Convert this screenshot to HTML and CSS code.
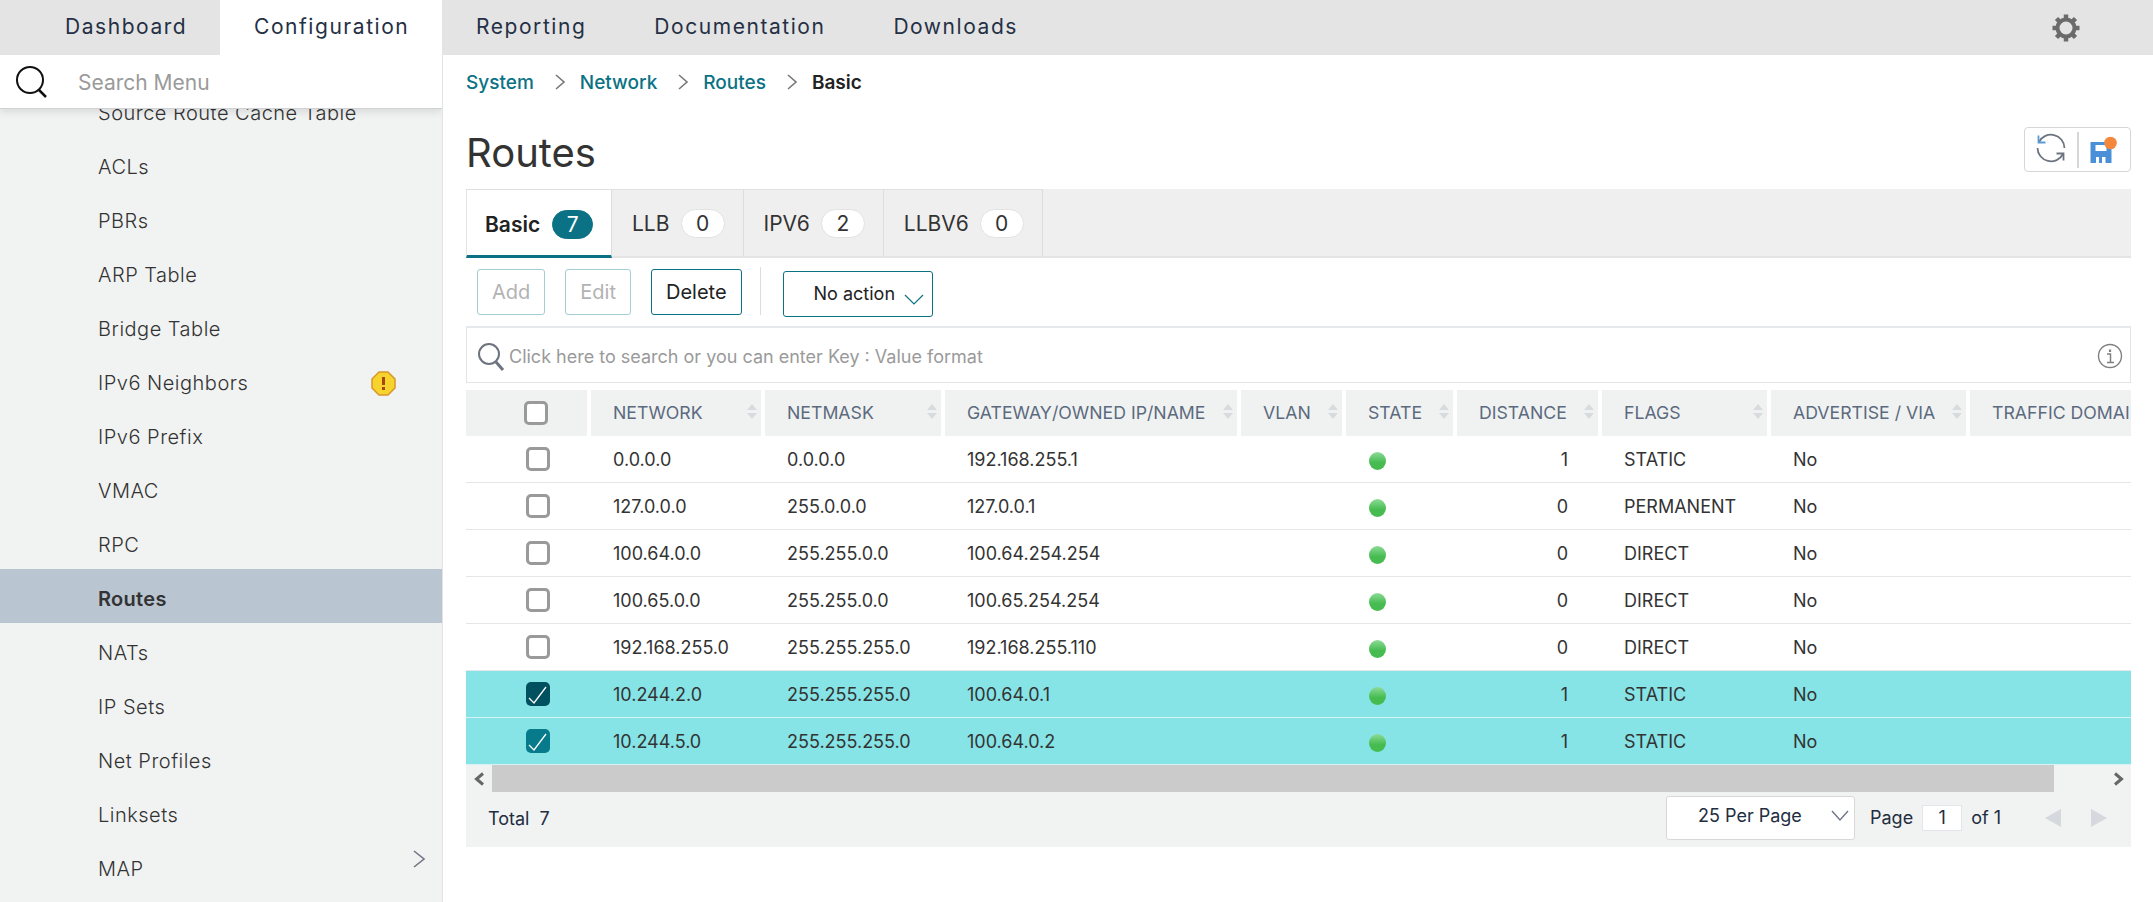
FILE: index.html
```html
<!DOCTYPE html>
<html lang="en">
<head>
    <meta charset="UTF-8">
    <title>Routes</title>
    <link rel="stylesheet" href="styles.css">
</head>
<body>
    <div class="topbar">
        <a class="nav-item nav-first">Dashboard</a>
        <a class="nav-item nav-active">Configuration</a>
        <a class="nav-item">Reporting</a>
        <a class="nav-item">Documentation</a>
        <a class="nav-item">Downloads</a>
        <svg class="gear" width="30" height="30" viewBox="0 0 30 30">
            <circle cx="15" cy="15" r="8.5" fill="none" stroke="#6b6b6b" stroke-width="4"/>
            <g stroke="#6b6b6b" stroke-width="4.5">
                <path d="M15 1.5V6M15 24V28.5M1.5 15H6M24 15H28.5M5.5 5.5L8.6 8.6M21.4 21.4L24.5 24.5M24.5 5.5L21.4 8.6M8.6 21.4L5.5 24.5"/>
            </g>
        </svg>
    </div>

    <div class="layout">
        <aside class="sidebar">
            <div class="menu-search">
                <svg width="34" height="34" viewBox="0 0 34 34">
                    <circle cx="15" cy="15" r="13" fill="none" stroke="#111" stroke-width="2"/>
                    <path d="M24 25L31 32" stroke="#111" stroke-width="2.5"/>
                </svg>
                <span>Search Menu</span>
            </div>
            <ul class="menu">
                <li class="menu-clipped">Source Route Cache Table</li>
                <li>ACLs</li>
                <li>PBRs</li>
                <li>ARP Table</li>
                <li>Bridge Table</li>
                <li>IPv6 Neighbors
                    <svg class="warn" width="25" height="25" viewBox="0 0 25 25">
                        <path d="M8 1H17L24 8V17L17 24H8L1 17V8Z" fill="#f6d32d" stroke="#d9962b" stroke-width="1.5" stroke-linejoin="round"/>
                        <path d="M12.5 6V14" stroke="#a8480f" stroke-width="3"/>
                        <path d="M12.5 16V19" stroke="#a8480f" stroke-width="3"/>
                    </svg>
                </li>
                <li>IPv6 Prefix</li>
                <li>VMAC</li>
                <li>RPC</li>
                <li class="menu-active">Routes</li>
                <li>NATs</li>
                <li>IP Sets</li>
                <li>Net Profiles</li>
                <li>Linksets</li>
                <li>MAP
                    <svg class="menu-arrow" width="12" height="18" viewBox="0 0 12 18">
                        <path d="M1 1L11 9L1 17" fill="none" stroke="#6f7686" stroke-width="1.6"/>
                    </svg>
                </li>
            </ul>
        </aside>

        <main class="content">
            <div class="breadcrumb">
                <a>System</a>
                <svg width="12" height="18" viewBox="0 0 12 18"><path d="M2 2L10 9L2 16" fill="none" stroke="#777" stroke-width="1.6"/></svg>
                <a>Network</a>
                <svg width="12" height="18" viewBox="0 0 12 18"><path d="M2 2L10 9L2 16" fill="none" stroke="#777" stroke-width="1.6"/></svg>
                <a>Routes</a>
                <svg width="12" height="18" viewBox="0 0 12 18"><path d="M2 2L10 9L2 16" fill="none" stroke="#777" stroke-width="1.6"/></svg>
                <b>Basic</b>
            </div>

            <div class="title-row">
                <h1>Routes</h1>
                <div class="page-actions">
                    <div class="action action-refresh">
                        <svg width="30" height="30" viewBox="0 0 30 30" fill="none" stroke="#6d7480" stroke-width="1.8">
                            <path d="M3 9A13.5 13.5 0 0 1 28.5 15"/>
                            <path d="M27 21A13.5 13.5 0 0 1 1.5 15"/>
                            <path d="M2.5 2.5V9.5H9.5" stroke="#5b9bd5"/>
                            <path d="M27.5 27.5V20.5H20.5"/>
                        </svg>
                    </div>
                    <div class="action action-save">
                        <svg width="32" height="32" viewBox="0 0 32 32">
                            <path d="M1.5 8H22.5V29H1.5Z" fill="#4a90d9"/>
                            <path d="M6.5 11H17.5V17H6.5Z" fill="#fff"/>
                            <path d="M7 23H16.5V29H7Z" fill="#fff"/>
                            <path d="M10 23H13V29H10Z" fill="#4a90d9"/>
                            <circle cx="21.5" cy="9" r="6.3" fill="#f5873c"/>
                        </svg>
                    </div>
                </div>
            </div>

            <div class="tabs">
                <div class="tab tab-active">Basic <span class="badge badge-on">7</span></div>
                <div class="tab">LLB <span class="badge">0</span></div>
                <div class="tab">IPV6 <span class="badge">2</span></div>
                <div class="tab">LLBV6 <span class="badge">0</span></div>
            </div>

            <div class="toolbar">
                <button class="btn btn-off">Add</button>
                <button class="btn btn-off">Edit</button>
                <button class="btn">Delete</button>
                <div class="tool-sep"></div>
                <div class="action-select">
                    No action
                    <svg width="20" height="12" viewBox="0 0 20 12"><path d="M1 2L10 11L19 2" fill="none" stroke="#0b7285" stroke-width="1.2"/></svg>
                </div>
            </div>

            <div class="searchbox">
                <svg width="28" height="30" viewBox="0 0 28 30" fill="none" stroke="#6d7480">
                    <circle cx="12" cy="12" r="10" stroke-width="2"/>
                    <path d="M19 20L26 28" stroke-width="3"/>
                </svg>
                <span>Click here to search or you can enter Key : Value format</span>
                <svg class="info" width="26" height="26" viewBox="0 0 26 26" fill="none" stroke="#808080">
                    <circle cx="13" cy="13" r="11.5" stroke-width="1.4"/>
                    <path d="M10 11H13.5V19M10 19.5H17" stroke-width="1.5"/>
                    <path d="M13 6.5V9" stroke-width="2.2"/>
                </svg>
            </div>

            <div class="grid">
                <div class="row row-head">
                    <div class="th"><span class="check check-head"></span></div>
                    <div class="th">NETWORK<i class="sort"></i></div>
                    <div class="th">NETMASK<i class="sort"></i></div>
                    <div class="th">GATEWAY/OWNED IP/NAME<i class="sort"></i></div>
                    <div class="th">VLAN<i class="sort"></i></div>
                    <div class="th">STATE<i class="sort"></i></div>
                    <div class="th">DISTANCE<i class="sort"></i></div>
                    <div class="th">FLAGS<i class="sort"></i></div>
                    <div class="th">ADVERTISE / VIA<i class="sort"></i></div>
                    <div class="th th-last">TRAFFIC DOMAIN</div>
                </div>
                <div class="row">
                    <div class="td td-check"><span class="check"></span></div>
                    <div class="td">0.0.0.0</div><div class="td">0.0.0.0</div><div class="td">192.168.255.1</div><div class="td"></div>
                    <div class="td"><span class="dot"></span></div><div class="td td-num">1</div><div class="td">STATIC</div><div class="td">No</div><div class="td"></div>
                </div>
                <div class="row">
                    <div class="td td-check"><span class="check"></span></div>
                    <div class="td">127.0.0.0</div><div class="td">255.0.0.0</div><div class="td">127.0.0.1</div><div class="td"></div>
                    <div class="td"><span class="dot"></span></div><div class="td td-num">0</div><div class="td">PERMANENT</div><div class="td">No</div><div class="td"></div>
                </div>
                <div class="row">
                    <div class="td td-check"><span class="check"></span></div>
                    <div class="td">100.64.0.0</div><div class="td">255.255.0.0</div><div class="td">100.64.254.254</div><div class="td"></div>
                    <div class="td"><span class="dot"></span></div><div class="td td-num">0</div><div class="td">DIRECT</div><div class="td">No</div><div class="td"></div>
                </div>
                <div class="row">
                    <div class="td td-check"><span class="check"></span></div>
                    <div class="td">100.65.0.0</div><div class="td">255.255.0.0</div><div class="td">100.65.254.254</div><div class="td"></div>
                    <div class="td"><span class="dot"></span></div><div class="td td-num">0</div><div class="td">DIRECT</div><div class="td">No</div><div class="td"></div>
                </div>
                <div class="row">
                    <div class="td td-check"><span class="check"></span></div>
                    <div class="td">192.168.255.0</div><div class="td">255.255.255.0</div><div class="td">192.168.255.110</div><div class="td"></div>
                    <div class="td"><span class="dot"></span></div><div class="td td-num">0</div><div class="td">DIRECT</div><div class="td">No</div><div class="td"></div>
                </div>
                <div class="row row-selected">
                    <div class="td td-check"><span class="check check-on check-dark"><svg width="24" height="24" viewBox="0 0 24 24"><path d="M3 16L8 21L20 5" fill="none" stroke="#fff" stroke-width="1.3"/></svg></span></div>
                    <div class="td">10.244.2.0</div><div class="td">255.255.255.0</div><div class="td">100.64.0.1</div><div class="td"></div>
                    <div class="td"><span class="dot"></span></div><div class="td td-num">1</div><div class="td">STATIC</div><div class="td">No</div><div class="td"></div>
                </div>
                <div class="row row-selected">
                    <div class="td td-check"><span class="check check-on"><svg width="24" height="24" viewBox="0 0 24 24"><path d="M3 16L8 21L20 5" fill="none" stroke="#fff" stroke-width="1.3"/></svg></span></div>
                    <div class="td">10.244.5.0</div><div class="td">255.255.255.0</div><div class="td">100.64.0.2</div><div class="td"></div>
                    <div class="td"><span class="dot"></span></div><div class="td td-num">1</div><div class="td">STATIC</div><div class="td">No</div><div class="td"></div>
                </div>
            </div>

            <div class="scrollbar">
                <div class="scroll-btn"><svg width="12" height="14" viewBox="0 0 12 14"><path d="M10 1.5L3.5 7L10 12.5" fill="none" stroke="#666" stroke-width="3"/></svg></div>
                <div class="scroll-thumb"></div>
                <div class="scroll-btn scroll-btn-right"><svg width="12" height="14" viewBox="0 0 12 14"><path d="M2 1.5L8.5 7L2 12.5" fill="none" stroke="#666" stroke-width="3"/></svg></div>
            </div>

            <div class="pager">
                <div class="total">Total&nbsp; 7</div>
                <div class="per-page">
                    25 Per Page
                    <svg width="18" height="12" viewBox="0 0 18 12"><path d="M1 1L9 10L17 1" fill="none" stroke="#6f7686" stroke-width="1.4"/></svg>
                </div>
                <span class="page-label">Page</span>
                <div class="page-input">1</div>
                <span class="page-of">of 1</span>
                <i class="page-prev"></i>
                <i class="page-next"></i>
            </div>
        </main>
    </div>
</body>
</html>
```

FILE: styles.css
```css
* {
    box-sizing: border-box;
}
html, body {
    height: 100%;
}
body {
    margin: 0;
    overflow: hidden;
    background-color: #ffffff;
    color: #333333;
    font-family: 'Inter', 'Liberation Sans', sans-serif;
    font-size: 18px;
}

/* top navigation */
.topbar {
    display: flex;
    align-items: center;
    height: 55px;
    background-color: #e4e4e4;
}
.nav-item {
    display: flex;
    align-items: center;
    height: 55px;
    padding: 0 34px 2px;
    font-size: 21px;
    letter-spacing: 1.55px;
    color: #243044;
}
.nav-first {
    width: 220px;
    padding-left: 65px;
}
.nav-active {
    width: 222px;
    background-color: #ffffff;
}
.gear {
    margin-left: auto;
    margin-right: 72px;
}

.layout {
    display: flex;
    height: 847px;
}

/* left menu */
.sidebar {
    position: relative;
    width: 443px;
    flex-shrink: 0;
    background-color: #f1f2f2;
    border-right: 1px solid #e2e3e4;
    overflow: hidden;
}
.menu-search {
    position: absolute;
    top: 0;
    left: 0;
    right: 0;
    z-index: 1;
    display: flex;
    align-items: center;
    height: 54px;
    padding-left: 15px;
    background-color: #ffffff;
    border-bottom: 1px solid #cfd2d5;
    box-shadow: 0 3px 8px rgba(0, 0, 0, 0.1);
    font-size: 21px;
    color: #9a9a9a;
}
.menu-search span {
    margin-left: 29px;
    margin-top: 2px;
}
.menu {
    list-style: none;
    margin: 0;
    padding: 28px 0 0;
}
.menu li {
    position: relative;
    display: flex;
    align-items: center;
    height: 54px;
    padding-left: 98px;
    padding-top: 6px;
    font-size: 20px;
    font-weight: 300;
    letter-spacing: 0.5px;
    color: #333333;
}
.menu .menu-active {
    background-color: #bac5d2;
    font-weight: 600;
    letter-spacing: 0.3px;
}
.warn {
    position: absolute;
    left: 371px;
    top: 18px;
}
.menu-arrow {
    position: absolute;
    left: 413px;
    top: 11px;
}

/* main column */
.content {
    width: 1665px;
    margin-left: 23px;
}
.breadcrumb {
    display: flex;
    align-items: center;
    gap: 17px;
    height: 54px;
    font-size: 19px;
    font-weight: 500;
    color: #0b7285;
}
.breadcrumb svg {
    margin-left: 3px;
    margin-right: -3px;
}
.breadcrumb b {
    font-weight: 600;
    color: #222222;
}
.title-row {
    display: flex;
    justify-content: space-between;
    height: 80px;
}
h1 {
    margin: 20px 0 0;
    font-size: 40px;
    font-weight: 400;
    line-height: 48px;
    color: #333333;
}
.page-actions {
    display: flex;
    align-items: center;
    width: 107px;
    height: 45px;
    margin-top: 18px;
    border: 1px solid #d6d6d6;
    border-radius: 4px;
}
.action {
    display: flex;
    align-items: center;
    justify-content: center;
    width: 53px;
    height: 36px;
}
.action-refresh svg {
    margin-bottom: 4px;
}
.action-save {
    border-left: 2px solid #d6d6d6;
}

/* tabs */
.tabs {
    display: flex;
    height: 69px;
    background-color: #efefef;
    border-bottom: 2px solid #e4e4e4;
}
.tab {
    display: flex;
    align-items: center;
    gap: 11px;
    padding: 1px 18px 0 20px;
    font-size: 21px;
    color: #333333;
    border-top: 1px solid #e0e0e0;
    border-right: 1px solid #dcdcdc;
}
.tab-active {
    width: 146px;
    padding-top: 4px;
    padding-left: 18px;
    gap: 12px;
    background-color: #ffffff;
    font-weight: 600;
    color: #222222;
    border-left: 1px solid #e4e4e4;
    border-bottom: 3px solid #0b7285;
    margin-bottom: -2px;
}
.badge {
    display: flex;
    align-items: center;
    justify-content: center;
    width: 44px;
    height: 29px;
    background-color: #ffffff;
    border: 1px solid #e2e2e2;
    border-radius: 15px;
    font-weight: 400;
}
.badge-on {
    width: 43px;
    background-color: #0b7285;
    border-color: #0b7285;
    color: #ffffff;
}

/* toolbar */
.toolbar {
    display: flex;
    align-items: flex-start;
    height: 70px;
    padding-top: 11px;
    padding-left: 11px;
    border-bottom: 2px solid #e6e9ec;
}
.btn {
    height: 46px;
    margin-right: 20px;
    padding: 0 14px;
    background-color: #ffffff;
    border: 1px solid #0b7285;
    border-radius: 3px;
    font-family: inherit;
    font-size: 20px;
    color: #222222;
}
.btn-off {
    border-color: #a5ced6;
    color: #b3b3b3;
}
.tool-sep {
    width: 1px;
    height: 48px;
    margin-top: -2px;
    margin-left: -2px;
    background-color: #dddddd;
}
.action-select {
    display: flex;
    align-items: center;
    width: 150px;
    height: 46px;
    margin-top: 2px;
    margin-left: 22px;
    padding-left: 30px;
    padding-bottom: 2px;
    border: 1px solid #0b7285;
    border-radius: 3px;
    font-size: 18px;
    color: #222222;
}
.action-select svg {
    margin-left: 9px;
    margin-top: 12px;
}

/* filter box */
.searchbox {
    position: relative;
    display: flex;
    align-items: center;
    height: 55px;
    padding-left: 10px;
    padding-top: 3px;
    border-left: 1px solid #e4e4e4;
    border-right: 1px solid #e4e4e4;
    border-bottom: 1px solid #e4e4e4;
    color: #9a9a9a;
}
.searchbox span {
    margin-left: 4px;
}
.info {
    position: absolute;
    right: 7px;
    top: 15px;
}

/* routes table */
.grid {
    margin-top: 7px;
    overflow: hidden;
}
.row {
    display: grid;
    grid-template-columns: 125px 174px 180px 296px 105px 111px 145px 169px 199px 161px;
    height: 47px;
    border-bottom: 1px solid #e4e6e8;
}
.row-head {
    height: 46px;
    border-bottom: 0;
}
.th {
    position: relative;
    display: flex;
    align-items: center;
    margin-right: 4px;
    padding-left: 22px;
    padding-bottom: 2px;
    background-color: #f0f2f2;
    font-size: 17.7px;
    color: #5c6a7e;
    white-space: nowrap;
    overflow: hidden;
}
.th:first-child {
    padding-left: 58px;
    padding-bottom: 0;
}
.th-last {
    margin-right: 0;
}
.sort {
    position: absolute;
    right: 4px;
    top: 14px;
    width: 10px;
    height: 15px;
}
.sort::before, .sort::after {
    content: "";
    position: absolute;
    left: 0;
    border-left: 5px solid transparent;
    border-right: 5px solid transparent;
}
.sort::before {
    top: 0;
    border-bottom: 6px solid #d8dbde;
}
.sort::after {
    bottom: 0;
    border-top: 6px solid #d8dbde;
}
.td {
    display: flex;
    align-items: center;
    padding-left: 22px;
    font-size: 18px;
    color: #333333;
    white-space: nowrap;
}
.td-check {
    padding-left: 60px;
}
.td-num {
    justify-content: flex-end;
    padding-right: 34px;
}
.check {
    display: block;
    width: 24px;
    height: 24px;
    background-color: #ffffff;
    border: 3px solid #9a9a9a;
    border-radius: 5px;
}
.check-on {
    background-color: #077a8c;
    border: 0;
}
.check-dark {
    background-color: #00505f;
}
.check-on svg {
    display: block;
}
.dot {
    display: block;
    width: 17px;
    height: 18px;
    margin-left: 1px;
    margin-top: 3px;
    border-radius: 50%;
    background: linear-gradient(#8ddb96, #45bb50 60%);
}
.row-selected {
    background-color: #86e3e6;
    border-bottom-color: #d6f3f4;
}

/* horizontal scrollbar */
.scrollbar {
    display: flex;
    height: 27px;
    background-color: #f1f2f2;
}
.scroll-btn {
    display: flex;
    align-items: center;
    justify-content: center;
    width: 26px;
}
.scroll-btn-right {
    width: 77px;
    justify-content: flex-end;
    padding-right: 6px;
}
.scroll-thumb {
    flex: 1;
    background-color: #cbcbcb;
}

/* footer */
.pager {
    display: flex;
    align-items: center;
    height: 55px;
    padding-bottom: 4px;
    background-color: #f1f2f2;
    color: #222d3f;
}
.total {
    margin-left: 22px;
    margin-top: 2px;
}
.per-page {
    display: flex;
    align-items: center;
    width: 189px;
    height: 44px;
    margin-left: auto;
    padding-left: 31px;
    padding-bottom: 4px;
    background-color: #ffffff;
    border: 1px solid #d8d8d8;
    border-radius: 3px;
}
.per-page svg {
    margin-left: 29px;
}
.page-label {
    margin-left: 15px;
}
.page-input {
    display: flex;
    align-items: center;
    justify-content: center;
    width: 40px;
    height: 26px;
    margin-left: 9px;
    background-color: #ffffff;
    border: 1px solid #e3e5ea;
}
.page-of {
    margin-left: 9px;
    margin-right: 44px;
}
.page-prev, .page-next {
    display: block;
    width: 0;
    height: 0;
    border-top: 9px solid transparent;
    border-bottom: 9px solid transparent;
}
.page-prev {
    border-right: 16px solid #d5d8dc;
}
.page-next {
    margin-left: 30px;
    margin-right: 24px;
    border-left: 16px solid #d5d8dc;
}
```
